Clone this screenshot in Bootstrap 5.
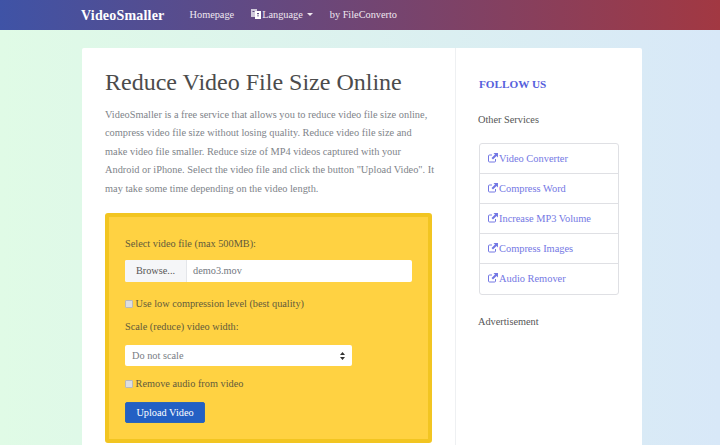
<!DOCTYPE html>
<html lang="en"><head><meta charset="utf-8"><title>VideoSmaller</title>
<link href="https://cdn.jsdelivr.net/npm/bootstrap@5.3.0/dist/css/bootstrap.min.css" rel="stylesheet">
<style>
html,body{height:445px;overflow:hidden}
body{font-family:"Liberation Serif",serif;font-size:10.3px;color:#555;background:linear-gradient(90deg,#e0fbe6,#d8e8f8)}
.topbar{height:30px;background:linear-gradient(90deg,#3f53a6,#a23842);padding:0 0 0 81px}
.brand-name{font-size:14px;font-weight:700;color:#fff;letter-spacing:.2px;margin-right:25px}
.topbar .nav-link{color:#f0e8f0;font-size:10.3px;padding:0;margin-right:17px}
.topbar .dropdown-toggle::after{margin-left:4px}
.sheet{width:560px;margin:18px 0 0 82px;height:397px;background:#fff;border-radius:2px 2px 0 0}
.main-col{width:374px;padding:19px 23px 0;border-right:1px solid #eef0f2}
.side-col{width:186px;padding:29px 23px 0}
.page-title{font-size:24px;font-weight:400;color:#4c4c4c;margin:0 0 8.500px;line-height:30px;white-space:nowrap}
.intro{line-height:18.5px;color:#80848a;margin:0 0 15px;font-size:10.35px;white-space:nowrap}
.upload-box{height:230px;background:#ffd242;border:4px solid #f2c521;border-radius:3px;padding:20px 16px;color:#625a3c}
.upload-box label,.field-label{display:block;line-height:14px}
.picker{width:287px;height:22px;margin:9px 0 15px;background:#fff;border-radius:2px;overflow:hidden}
.browse{width:62px;background:#f5f6f8;border-right:1px solid #e4e6ea;color:#555;text-align:center;line-height:22px}
.fname{padding-left:6px;line-height:22px;color:#737780}
.tick{appearance:none;width:8px;height:8px;margin:0;vertical-align:-1px;background:#dcdde0;border:1px solid #b9b9bb;border-radius:1px}
.gap-label{margin-top:9px}
.scale-select{width:227px;height:21px;margin:11px 0;padding:0 7px;font-size:10.3px;font-family:inherit;color:#777c84;border:0;border-radius:2px;background-position:right 7px center;background-size:5px 8px;background-image:url("data:image/svg+xml,%3csvg xmlns='http://www.w3.org/2000/svg' viewBox='0 0 5 8'%3e%3cpath d='M2.500 0 5 3H0zM2.500 8 0 5h5z' fill='%23333'/%3e%3c/svg%3e")}
.send-btn{display:block;width:80px;height:21px;margin-top:11px;padding:0;font-family:inherit;font-size:10.3px;line-height:19px;color:#fff;background:#2360c4;border:1px solid #2c66b8;border-radius:2px}
.follow{font-size:11.2px;font-weight:700;color:#5660dc;margin:0 0 22px;line-height:14px}
.side-text{margin:0;line-height:14px;color:#555;margin-left:-1px}
.svc-list{margin:16px 0 20px;width:140px;border-radius:3px;border:1px solid #dfe0e4}
.svc-list .list-group-item{height:30px;padding:0 0 0 8px;line-height:29px;font-size:10.4px;color:#7478e4;border:0;border-bottom:1px solid #dfe0e4;background:transparent;white-space:nowrap}
.svc-list .list-group-item:last-child{border-bottom:0}
.ext{width:10px;height:10px;vertical-align:-1px;margin-right:1px}
</style></head><body>
<nav class="topbar d-flex align-items-center">
<a class="brand-name text-decoration-none" href="#">VideoSmaller</a>
<a class="nav-link" href="#">Homepage</a>
<a class="nav-link dropdown-toggle" href="#"><svg width="10" height="10" viewBox="0 0 10 10" style="vertical-align:-1px;margin-right:1px"><path d="M0 0h6v8H0z" fill="#cfc9da"/><path d="M4 2h6v8H4z" fill="#fff"/><path d="M1.500 2h2v1h-2zM6 4h2v1H6zM6.500 5.500h1v2h-1z" fill="#5a4a80"/></svg>Language</a>
<a class="nav-link" href="#">by FileConverto</a>
</nav>
<div class="sheet d-flex">
<main class="main-col">
<h1 class="page-title">Reduce Video File Size Online</h1>
<p class="intro">VideoSmaller is a free service that allows you to reduce video file size online,<br>compress video file size without losing quality. Reduce video file size and<br>make video file smaller. Reduce size of MP4 videos captured with your<br>Android or iPhone. Select the video file and click the button "Upload Video". It<br>may take some time depending on the video length.</p>
<form class="upload-box">
<div class="field-label">Select video file (max 500MB):</div>
<div class="picker d-flex"><span class="browse">Browse...</span><span class="fname">demo3.mov</span></div>
<label><input type="checkbox" class="tick"> Use low compression level (best quality)</label>
<div class="field-label gap-label">Scale (reduce) video width:</div>
<select class="form-select scale-select"><option>Do not scale</option></select>
<label><input type="checkbox" class="tick"> Remove audio from video</label>
<button type="button" class="btn send-btn">Upload Video</button>
</form>
</main>
<aside class="side-col">
<h2 class="follow">FOLLOW US</h2>
<p class="side-text">Other Services</p>
<div class="list-group svc-list">
<a class="list-group-item" href="#"><svg class="ext" viewBox="0 0 10 10"><path d="M7.5 6v2A1 1 0 0 1 6.500 9H1.500A1 1 0 0 1 .5 8V3A1 1 0 0 1 1.500 2H4" fill="none" stroke="currentColor"/><path d="M5.500 0H10v4.500L8.500 3 5 6.500 3.500 5 7 1.500z" fill="currentColor"/></svg>Video Converter</a>
<a class="list-group-item" href="#"><svg class="ext" viewBox="0 0 10 10"><path d="M7.5 6v2A1 1 0 0 1 6.500 9H1.500A1 1 0 0 1 .5 8V3A1 1 0 0 1 1.500 2H4" fill="none" stroke="currentColor"/><path d="M5.500 0H10v4.500L8.500 3 5 6.500 3.500 5 7 1.500z" fill="currentColor"/></svg>Compress Word</a>
<a class="list-group-item" href="#"><svg class="ext" viewBox="0 0 10 10"><path d="M7.5 6v2A1 1 0 0 1 6.500 9H1.500A1 1 0 0 1 .5 8V3A1 1 0 0 1 1.500 2H4" fill="none" stroke="currentColor"/><path d="M5.500 0H10v4.500L8.500 3 5 6.500 3.500 5 7 1.500z" fill="currentColor"/></svg>Increase MP3 Volume</a>
<a class="list-group-item" href="#"><svg class="ext" viewBox="0 0 10 10"><path d="M7.5 6v2A1 1 0 0 1 6.500 9H1.500A1 1 0 0 1 .5 8V3A1 1 0 0 1 1.500 2H4" fill="none" stroke="currentColor"/><path d="M5.500 0H10v4.500L8.500 3 5 6.500 3.500 5 7 1.500z" fill="currentColor"/></svg>Compress Images</a>
<a class="list-group-item" href="#"><svg class="ext" viewBox="0 0 10 10"><path d="M7.5 6v2A1 1 0 0 1 6.500 9H1.500A1 1 0 0 1 .5 8V3A1 1 0 0 1 1.500 2H4" fill="none" stroke="currentColor"/><path d="M5.500 0H10v4.500L8.500 3 5 6.500 3.500 5 7 1.500z" fill="currentColor"/></svg>Audio Remover</a>
</div>
<p class="side-text">Advertisement</p>
</aside>
</div>
<script src="https://cdn.jsdelivr.net/npm/bootstrap@5.3.0/dist/js/bootstrap.bundle.min.js"></script>
</body></html>
